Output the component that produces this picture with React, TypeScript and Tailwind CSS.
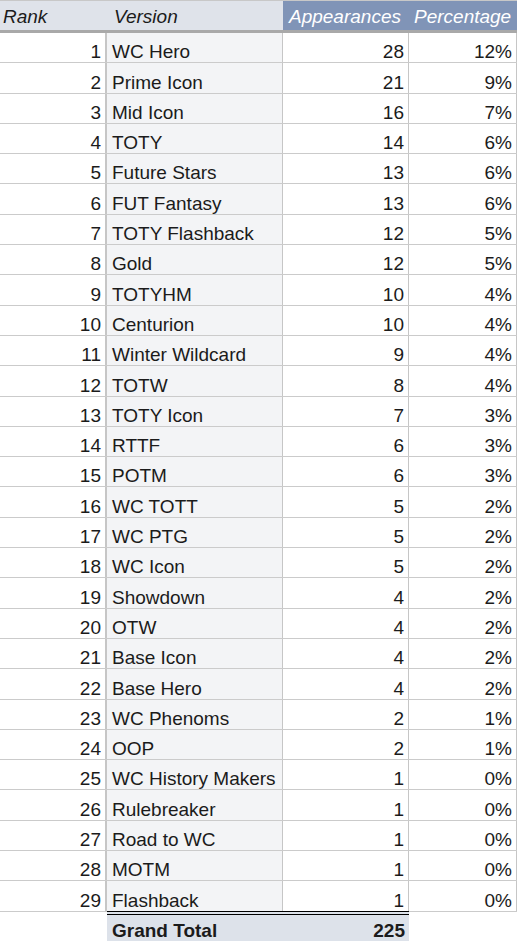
const rows: [string, number, string][] = [
  ["WC Hero", 28, "12%"],
  ["Prime Icon", 21, "9%"],
  ["Mid Icon", 16, "7%"],
  ["TOTY", 14, "6%"],
  ["Future Stars", 13, "6%"],
  ["FUT Fantasy", 13, "6%"],
  ["TOTY Flashback", 12, "5%"],
  ["Gold", 12, "5%"],
  ["TOTYHM", 10, "4%"],
  ["Centurion", 10, "4%"],
  ["Winter Wildcard", 9, "4%"],
  ["TOTW", 8, "4%"],
  ["TOTY Icon", 7, "3%"],
  ["RTTF", 6, "3%"],
  ["POTM", 6, "3%"],
  ["WC TOTT", 5, "2%"],
  ["WC PTG", 5, "2%"],
  ["WC Icon", 5, "2%"],
  ["Showdown", 4, "2%"],
  ["OTW", 4, "2%"],
  ["Base Icon", 4, "2%"],
  ["Base Hero", 4, "2%"],
  ["WC Phenoms", 2, "1%"],
  ["OOP", 2, "1%"],
  ["WC History Makers", 1, "0%"],
  ["Rulebreaker", 1, "0%"],
  ["Road to WC", 1, "0%"],
  ["MOTM", 1, "0%"],
  ["Flashback", 1, "0%"],
];

export default function App() {
  return (
    <div
      className="w-[517px] h-[942px] overflow-hidden bg-white text-[19px] leading-[20px] text-[#1b1b1b]"
      style={{ fontFamily: '"Liberation Sans", Arial, sans-serif' }}
    >
      {/* Header */}
      <div className="flex h-[33px] border-t border-[#c8c8c8] border-b-[3px] border-b-[#a9a9a9] italic">
        <div className="w-[107px] bg-[#dfe3ea] flex items-end pb-[3px] pl-[3px]">Rank</div>
        <div className="w-[176px] bg-[#dfe3ea] flex items-end pb-[3px] pl-[7px]">Version</div>
        <div className="w-[126px] bg-[#8094b7] text-white flex items-end pb-[3px] pl-[6px] whitespace-nowrap">
          Appearances
        </div>
        <div className="w-[108px] bg-[#8094b7] text-white flex items-end pb-[3px] pl-[5px] whitespace-nowrap">
          Percentage
        </div>
      </div>

      {/* Body */}
      {rows.map(([version, count, pct], i) => (
        <div key={version} className="flex h-[30.3px] border-b border-[#cbcbcb]">
          <div className="w-[107px] border-r-2 border-[#c6c6c6] flex items-end justify-end pr-[4px]">
            {i + 1}
          </div>
          <div className="w-[176px] bg-[#f3f4f6] border-r border-[#c6c6c6] flex items-end pl-[5px] whitespace-nowrap">
            {version}
          </div>
          <div className="w-[126px] border-r border-[#c6c6c6] flex items-end justify-end pr-[4px]">
            {count}
          </div>
          <div className="w-[108px] border-r border-[#c6c6c6] flex items-end justify-end pr-[4px]">
            {pct}
          </div>
        </div>
      ))}

      {/* Grand total */}
      <div className="flex h-[30px] -mt-px font-bold">
        <div className="w-[107px]" />
        <div className="w-[302px] bg-[#dde2ea] border-t-4 border-double border-black flex items-end justify-between pl-[5px] pr-[4px]">
          <span>Grand Total</span>
          <span>225</span>
        </div>
        <div className="w-[108px]" />
      </div>
    </div>
  );
}
